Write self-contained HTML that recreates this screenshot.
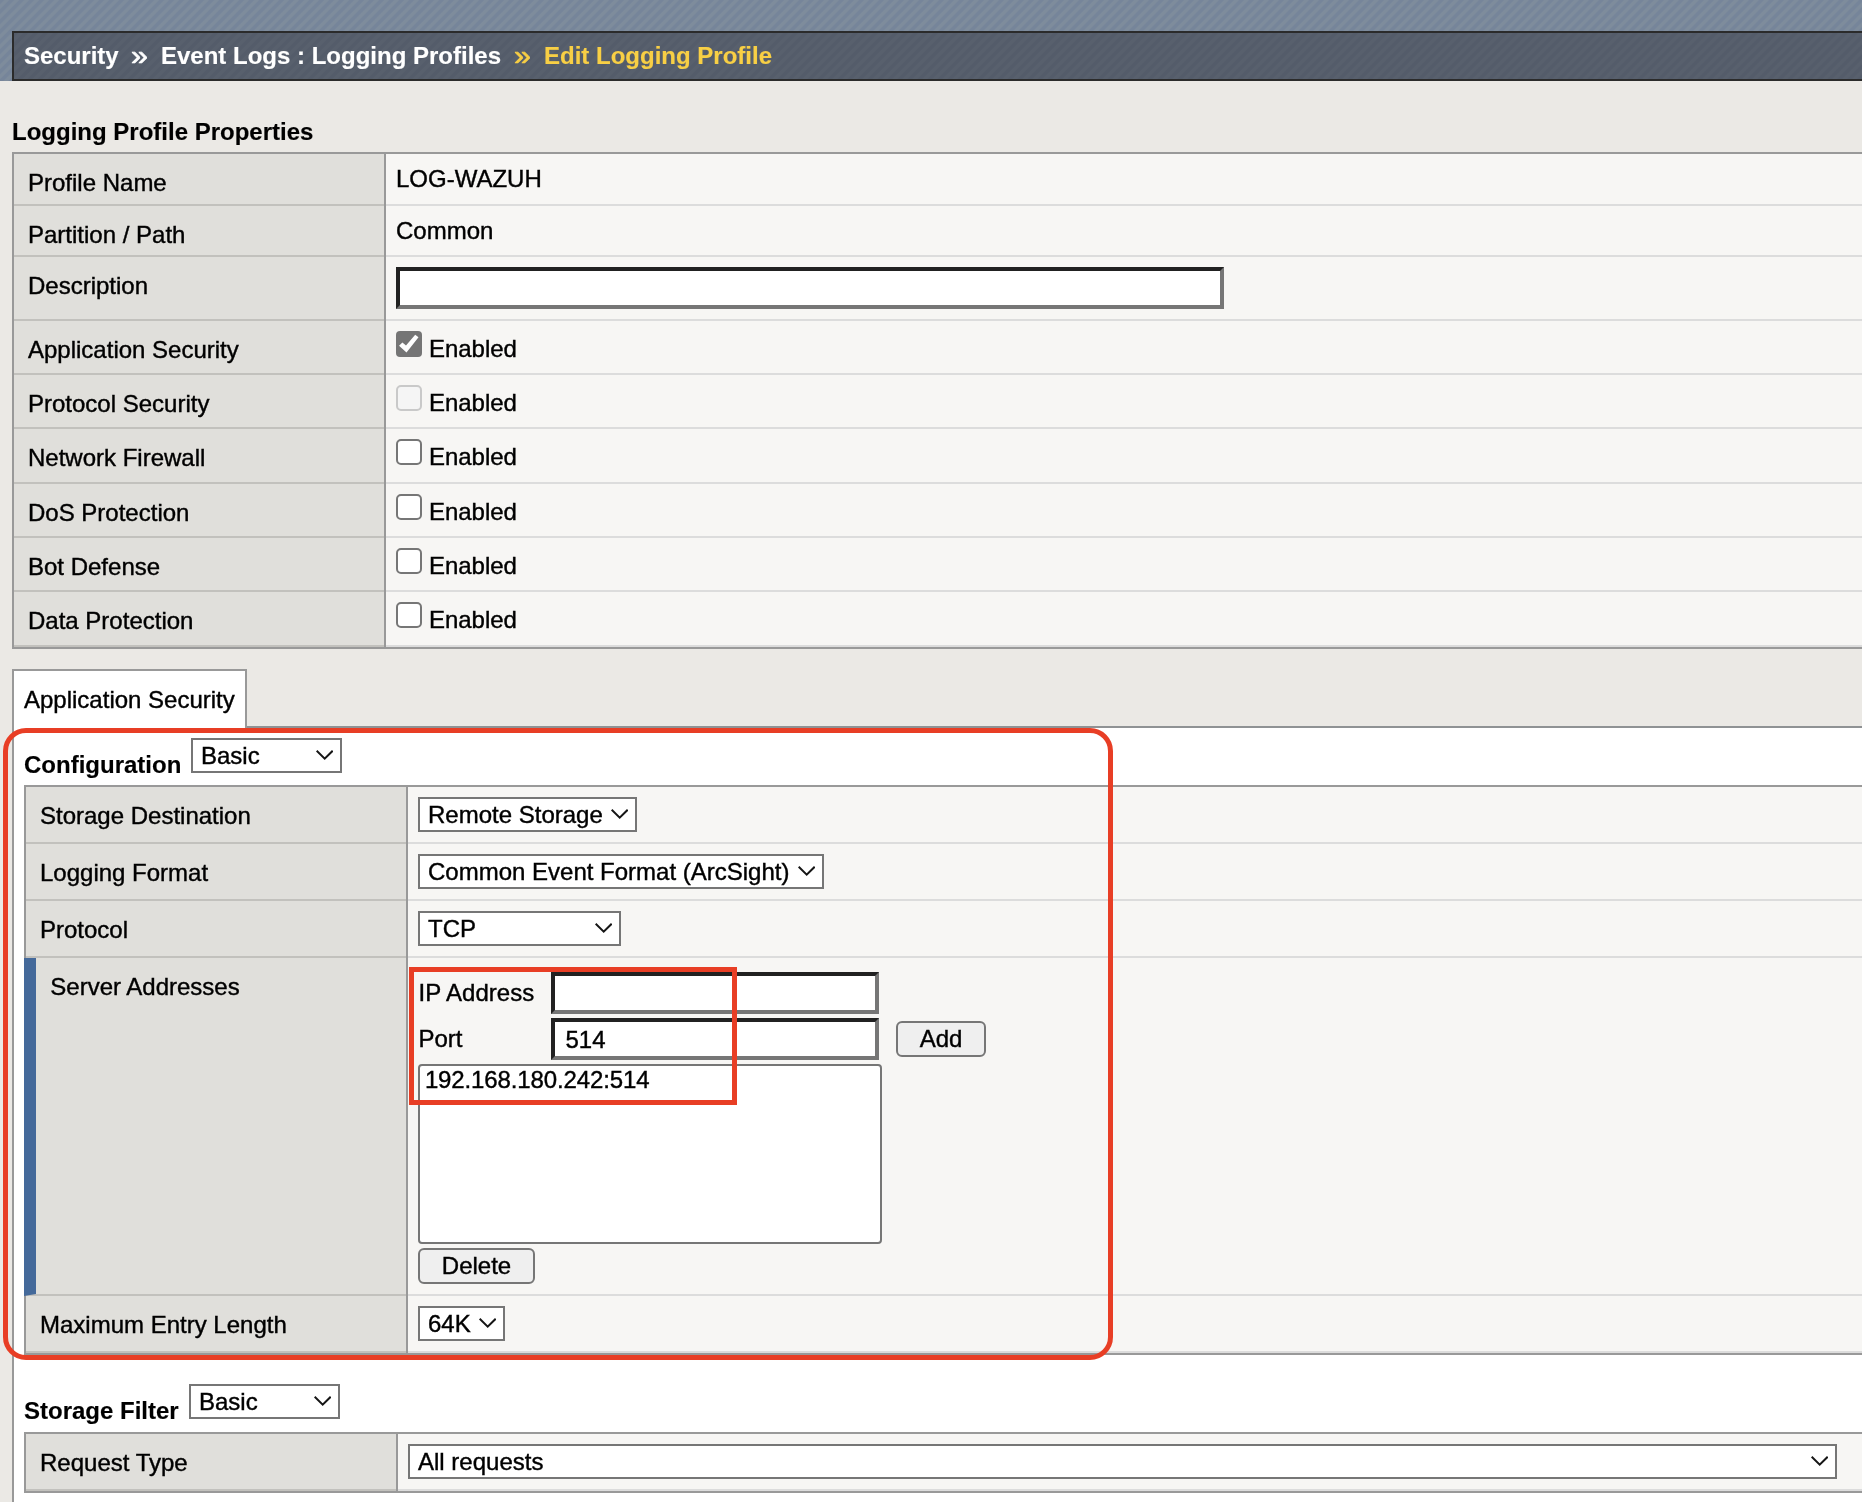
<!DOCTYPE html>
<html lang="en">
<head>
<meta charset="utf-8">
<title>Edit Logging Profile</title>
<style>
html,body{margin:0;padding:0;}
html{width:1862px;height:1502px;overflow:hidden;background:#ebe9e5;}
body{width:1862px;height:1502px;overflow:hidden;position:relative;background:#ebe9e5;font-family:"Liberation Sans", Arial, Helvetica, sans-serif;font-size:24px;color:#000;}
#root{position:absolute;left:0;top:0;width:1862px;height:1502px;overflow:hidden;will-change:transform;}
.b{position:absolute;}
.t{position:absolute;white-space:nowrap;line-height:28px;font-size:24px;-webkit-text-stroke:0.4px currentColor;}
.bold{font-weight:bold;-webkit-text-stroke-width:0.15px;}
.gl{font-size:27px;font-weight:normal;-webkit-text-stroke-width:0.7px;transform:scaleX(1.12);transform-origin:0 0;}
.wht{color:#fff;}
.yel{color:#f8cf45;}
.hdr{background:repeating-linear-gradient(135deg,#76859a 0,#76859a 2.6px,#7e8c9c 3.6px,#7e8c9c 6.1px,#76859a 7.07px);}
.crumb{box-sizing:border-box;border:2px solid #2b2b2b;background:repeating-linear-gradient(135deg,#545c6a 0,#545c6a 2.6px,#58606d 3.6px,#58606d 6.1px,#545c6a 7.07px);}
.inp{box-sizing:border-box;background:#fff;border:4px solid;border-color:#212121 #767676 #767676 #212121;}
.cb{box-sizing:border-box;background:#fff;border:2px solid #767676;border-radius:5px;}
.cb.on{background:#757575;border:0;border-radius:4px;}
.cb.dis{background:#f5f5f5;border-color:#c9c9c9;}
.cb svg{display:block;}
.sel{box-sizing:border-box;background:#fff;border:2px solid #767676;}
.sel .st{-webkit-text-stroke:0.4px currentColor;position:absolute;left:8px;top:1.7px;line-height:28px;white-space:nowrap;}
.sel .cv{position:absolute;right:6.6px;top:10.4px;line-height:0;}
.sel .cv svg{display:block;}
.btn{box-sizing:border-box;background:#efefef;border:2px solid #767676;border-radius:6px;}
.lst{box-sizing:border-box;background:#fff;border:2px solid #767676;border-radius:4px;}
</style>
</head>
<body>
<div id="root">
<div class="b hdr" style="left:0px;top:0px;width:1862px;height:81px;"></div>
<div class="b crumb" style="left:12px;top:31px;width:1900px;height:50px;"></div>
<div class="t bold wht" style="left:24px;top:42.2px;">Security</div>
<div class="t bold wht gl" style="left:131.0px;top:42.2px;">&#187;</div>
<div class="t bold wht" style="left:161px;top:42.2px;">Event Logs : Logging Profiles</div>
<div class="t bold yel gl" style="left:514.0px;top:42.2px;">&#187;</div>
<div class="t bold yel" style="left:544px;top:42.2px;">Edit Logging Profile</div>
<div class="t bold" style="left:12.0px;top:117.5px;">Logging Profile Properties</div>
<div class="b " style="left:12px;top:152px;width:1900px;height:497px;background:#999;"></div>
<div class="b " style="left:14px;top:154px;width:370px;height:52px;background:#c2c1bd;"></div>
<div class="b " style="left:14px;top:154px;width:370px;height:50px;background:#e0dfdb;"></div>
<div class="b " style="left:386px;top:154px;width:1500px;height:52px;background:#dcdcdc;"></div>
<div class="b " style="left:386px;top:154px;width:1500px;height:50px;background:#f7f6f4;"></div>
<div class="t " style="left:28px;top:168.5px;">Profile Name</div>
<div class="b " style="left:14px;top:206px;width:370px;height:51px;background:#c2c1bd;"></div>
<div class="b " style="left:14px;top:206px;width:370px;height:49px;background:#e0dfdb;"></div>
<div class="b " style="left:386px;top:206px;width:1500px;height:51px;background:#dcdcdc;"></div>
<div class="b " style="left:386px;top:206px;width:1500px;height:49px;background:#f7f6f4;"></div>
<div class="t " style="left:28px;top:221.0px;">Partition / Path</div>
<div class="b " style="left:14px;top:257px;width:370px;height:64px;background:#c2c1bd;"></div>
<div class="b " style="left:14px;top:257px;width:370px;height:62px;background:#e0dfdb;"></div>
<div class="b " style="left:386px;top:257px;width:1500px;height:64px;background:#dcdcdc;"></div>
<div class="b " style="left:386px;top:257px;width:1500px;height:62px;background:#f7f6f4;"></div>
<div class="t " style="left:28px;top:271.5px;">Description</div>
<div class="b " style="left:14px;top:321px;width:370px;height:54px;background:#c2c1bd;"></div>
<div class="b " style="left:14px;top:321px;width:370px;height:52px;background:#e0dfdb;"></div>
<div class="b " style="left:386px;top:321px;width:1500px;height:54px;background:#dcdcdc;"></div>
<div class="b " style="left:386px;top:321px;width:1500px;height:52px;background:#f7f6f4;"></div>
<div class="t " style="left:28px;top:335.5px;">Application Security</div>
<div class="b " style="left:14px;top:375px;width:370px;height:54px;background:#c2c1bd;"></div>
<div class="b " style="left:14px;top:375px;width:370px;height:52px;background:#e0dfdb;"></div>
<div class="b " style="left:386px;top:375px;width:1500px;height:54px;background:#dcdcdc;"></div>
<div class="b " style="left:386px;top:375px;width:1500px;height:52px;background:#f7f6f4;"></div>
<div class="t " style="left:28px;top:390.0px;">Protocol Security</div>
<div class="b " style="left:14px;top:429px;width:370px;height:55px;background:#c2c1bd;"></div>
<div class="b " style="left:14px;top:429px;width:370px;height:53px;background:#e0dfdb;"></div>
<div class="b " style="left:386px;top:429px;width:1500px;height:55px;background:#dcdcdc;"></div>
<div class="b " style="left:386px;top:429px;width:1500px;height:53px;background:#f7f6f4;"></div>
<div class="t " style="left:28px;top:444.0px;">Network Firewall</div>
<div class="b " style="left:14px;top:484px;width:370px;height:54px;background:#c2c1bd;"></div>
<div class="b " style="left:14px;top:484px;width:370px;height:52px;background:#e0dfdb;"></div>
<div class="b " style="left:386px;top:484px;width:1500px;height:54px;background:#dcdcdc;"></div>
<div class="b " style="left:386px;top:484px;width:1500px;height:52px;background:#f7f6f4;"></div>
<div class="t " style="left:28px;top:499.0px;">DoS Protection</div>
<div class="b " style="left:14px;top:538px;width:370px;height:54px;background:#c2c1bd;"></div>
<div class="b " style="left:14px;top:538px;width:370px;height:52px;background:#e0dfdb;"></div>
<div class="b " style="left:386px;top:538px;width:1500px;height:54px;background:#dcdcdc;"></div>
<div class="b " style="left:386px;top:538px;width:1500px;height:52px;background:#f7f6f4;"></div>
<div class="t " style="left:28px;top:553.0px;">Bot Defense</div>
<div class="b " style="left:14px;top:592px;width:370px;height:55px;background:#c2c1bd;"></div>
<div class="b " style="left:14px;top:592px;width:370px;height:53px;background:#e0dfdb;"></div>
<div class="b " style="left:386px;top:592px;width:1500px;height:55px;background:#dcdcdc;"></div>
<div class="b " style="left:386px;top:592px;width:1500px;height:53px;background:#f7f6f4;"></div>
<div class="t " style="left:28px;top:607.0px;">Data Protection</div>
<div class="t " style="left:396px;top:165.0px;">LOG-WAZUH</div>
<div class="t " style="left:396px;top:217.0px;">Common</div>
<div class="b inp" style="left:396px;top:267px;width:828px;height:42px;"></div>
<div class="b cb on" style="left:396px;top:331px;width:26px;height:26px;"><svg width="26" height="26" viewBox="0 0 26 26"><polygon points="3.05,14.65 6.4,11.45 10,14.5 19.2,3.85 22.5,6.25 10.5,21.45" fill="#fff"/></svg></div>
<div class="t " style="left:428.9px;top:334.7px;">Enabled</div>
<div class="b cb dis" style="left:396px;top:385px;width:26px;height:26px;"></div>
<div class="t " style="left:428.9px;top:388.7px;">Enabled</div>
<div class="b cb" style="left:396px;top:439px;width:26px;height:26px;"></div>
<div class="t " style="left:428.9px;top:442.7px;">Enabled</div>
<div class="b cb" style="left:396px;top:494px;width:26px;height:26px;"></div>
<div class="t " style="left:428.9px;top:497.6px;">Enabled</div>
<div class="b cb" style="left:396px;top:548px;width:26px;height:26px;"></div>
<div class="t " style="left:428.9px;top:551.6px;">Enabled</div>
<div class="b cb" style="left:396px;top:602px;width:26px;height:26px;"></div>
<div class="t " style="left:428.9px;top:605.6px;">Enabled</div>
<div class="b " style="left:12px;top:726px;width:1900px;height:2px;background:#8f9294;"></div>
<div class="b " style="left:12px;top:728px;width:1900px;height:800px;background:#fff;border-left:2px solid #999;box-sizing:border-box;"></div>
<div class="b " style="left:12px;top:669px;width:235px;height:60px;background:#fff;border:2px solid #999;border-bottom:0;box-sizing:border-box;"></div>
<div class="t " style="left:24px;top:685.7px;">Application Security</div>
<div class="t bold" style="left:24px;top:751.0px;">Configuration</div>
<div class="b sel" style="left:191px;top:738px;width:151px;height:35px;"><span class="st">Basic</span><span class="cv"><svg class="chev" width="17.4" height="10" viewBox="0 0 17.4 10"><path d="M0.7 0.8 L8.7 8.6 L16.7 0.8" fill="none" stroke="#151515" stroke-width="2"/></svg></span></div>
<div class="b " style="left:24px;top:785px;width:1900px;height:570px;background:#999;"></div>
<div class="b " style="left:26px;top:787px;width:380px;height:57px;background:#c2c1bd;"></div>
<div class="b " style="left:26px;top:787px;width:380px;height:55px;background:#e0dfdb;"></div>
<div class="b " style="left:408px;top:787px;width:1900px;height:57px;background:#dcdcdc;"></div>
<div class="b " style="left:408px;top:787px;width:1900px;height:55px;background:#f7f6f4;"></div>
<div class="b " style="left:26px;top:844px;width:380px;height:57px;background:#c2c1bd;"></div>
<div class="b " style="left:26px;top:844px;width:380px;height:55px;background:#e0dfdb;"></div>
<div class="b " style="left:408px;top:844px;width:1900px;height:57px;background:#dcdcdc;"></div>
<div class="b " style="left:408px;top:844px;width:1900px;height:55px;background:#f7f6f4;"></div>
<div class="b " style="left:26px;top:901px;width:380px;height:57px;background:#c2c1bd;"></div>
<div class="b " style="left:26px;top:901px;width:380px;height:55px;background:#e0dfdb;"></div>
<div class="b " style="left:408px;top:901px;width:1900px;height:57px;background:#dcdcdc;"></div>
<div class="b " style="left:408px;top:901px;width:1900px;height:55px;background:#f7f6f4;"></div>
<div class="b " style="left:26px;top:958px;width:380px;height:338px;background:#c2c1bd;"></div>
<div class="b " style="left:26px;top:958px;width:380px;height:336px;background:#e0dfdb;"></div>
<div class="b " style="left:408px;top:958px;width:1900px;height:338px;background:#dcdcdc;"></div>
<div class="b " style="left:408px;top:958px;width:1900px;height:336px;background:#f7f6f4;"></div>
<div class="b " style="left:26px;top:1296px;width:380px;height:57px;background:#c2c1bd;"></div>
<div class="b " style="left:26px;top:1296px;width:380px;height:55px;background:#e0dfdb;"></div>
<div class="b " style="left:408px;top:1296px;width:1900px;height:57px;background:#dcdcdc;"></div>
<div class="b " style="left:408px;top:1296px;width:1900px;height:55px;background:#f7f6f4;"></div>
<div class="b " style="left:24px;top:958px;width:12px;height:338px;background:#44699a;clip-path:polygon(0 0,100% 0,100% calc(100% - 2px),0 100%);"></div>
<div class="t " style="left:40.0px;top:801.5px;">Storage Destination</div>
<div class="t " style="left:40.0px;top:858.5px;">Logging Format</div>
<div class="t " style="left:40.0px;top:915.5px;">Protocol</div>
<div class="t " style="left:50.3px;top:972.5px;">Server Addresses</div>
<div class="t " style="left:40.0px;top:1311.0px;">Maximum Entry Length</div>
<div class="b sel" style="left:418px;top:797px;width:219px;height:35px;"><span class="st">Remote Storage</span><span class="cv"><svg class="chev" width="17.4" height="10" viewBox="0 0 17.4 10"><path d="M0.7 0.8 L8.7 8.6 L16.7 0.8" fill="none" stroke="#151515" stroke-width="2"/></svg></span></div>
<div class="b sel" style="left:418px;top:854px;width:406px;height:35px;"><span class="st">Common Event Format (ArcSight)</span><span class="cv"><svg class="chev" width="17.4" height="10" viewBox="0 0 17.4 10"><path d="M0.7 0.8 L8.7 8.6 L16.7 0.8" fill="none" stroke="#151515" stroke-width="2"/></svg></span></div>
<div class="b sel" style="left:418px;top:911px;width:203px;height:35px;"><span class="st">TCP</span><span class="cv"><svg class="chev" width="17.4" height="10" viewBox="0 0 17.4 10"><path d="M0.7 0.8 L8.7 8.6 L16.7 0.8" fill="none" stroke="#151515" stroke-width="2"/></svg></span></div>
<div class="b sel" style="left:418px;top:1306px;width:87px;height:35px;"><span class="st">64K</span><span class="cv"><svg class="chev" width="17.4" height="10" viewBox="0 0 17.4 10"><path d="M0.7 0.8 L8.7 8.6 L16.7 0.8" fill="none" stroke="#151515" stroke-width="2"/></svg></span></div>
<div class="t " style="left:418.5px;top:978.8px;">IP Address</div>
<div class="t " style="left:418.5px;top:1024.8px;">Port</div>
<div class="b inp" style="left:551px;top:972px;width:328px;height:42px;"></div>
<div class="b inp" style="left:551px;top:1018px;width:328px;height:42px;"></div>
<div class="t " style="left:565.5px;top:1025.5px;">514</div>
<div class="b btn" style="left:896px;top:1021px;width:90px;height:36px;"></div>
<div class="t " style="left:896px;top:1024.9px;width:90px;text-align:center;">Add</div>
<div class="b lst" style="left:418px;top:1064px;width:464px;height:180px;"></div>
<div class="t " style="left:424.9px;top:1065.8px;letter-spacing:-0.12px;">192.168.180.242:514</div>
<div class="b btn" style="left:418px;top:1248px;width:117px;height:36px;"></div>
<div class="t " style="left:418px;top:1251.9px;width:117px;text-align:center;">Delete</div>
<div class="t bold" style="left:24px;top:1396.8px;">Storage Filter</div>
<div class="b sel" style="left:189px;top:1384px;width:151px;height:35px;"><span class="st">Basic</span><span class="cv"><svg class="chev" width="17.4" height="10" viewBox="0 0 17.4 10"><path d="M0.7 0.8 L8.7 8.6 L16.7 0.8" fill="none" stroke="#151515" stroke-width="2"/></svg></span></div>
<div class="b " style="left:24px;top:1432px;width:1900px;height:61px;background:#999;"></div>
<div class="b " style="left:26px;top:1434px;width:370px;height:57px;background:#c2c1bd;"></div>
<div class="b " style="left:26px;top:1434px;width:370px;height:55px;background:#e0dfdb;"></div>
<div class="b " style="left:398px;top:1434px;width:1900px;height:57px;background:#dcdcdc;"></div>
<div class="b " style="left:398px;top:1434px;width:1900px;height:55px;background:#f7f6f4;"></div>
<div class="t " style="left:40.0px;top:1448.8px;">Request Type</div>
<div class="b sel" style="left:408px;top:1444px;width:1429px;height:35px;"><span class="st">All requests</span><span class="cv"><svg class="chev" width="17.4" height="10" viewBox="0 0 17.4 10"><path d="M0.7 0.8 L8.7 8.6 L16.7 0.8" fill="none" stroke="#151515" stroke-width="2"/></svg></span></div>
<div class="b " style="left:3px;top:728px;width:1110px;height:632px;border:5px solid #e83e25;border-radius:23px;box-sizing:border-box;"></div>
<div class="b " style="left:409px;top:967px;width:328px;height:138px;border:5px solid #e83e25;box-sizing:border-box;"></div>
</div>
</body>
</html>
